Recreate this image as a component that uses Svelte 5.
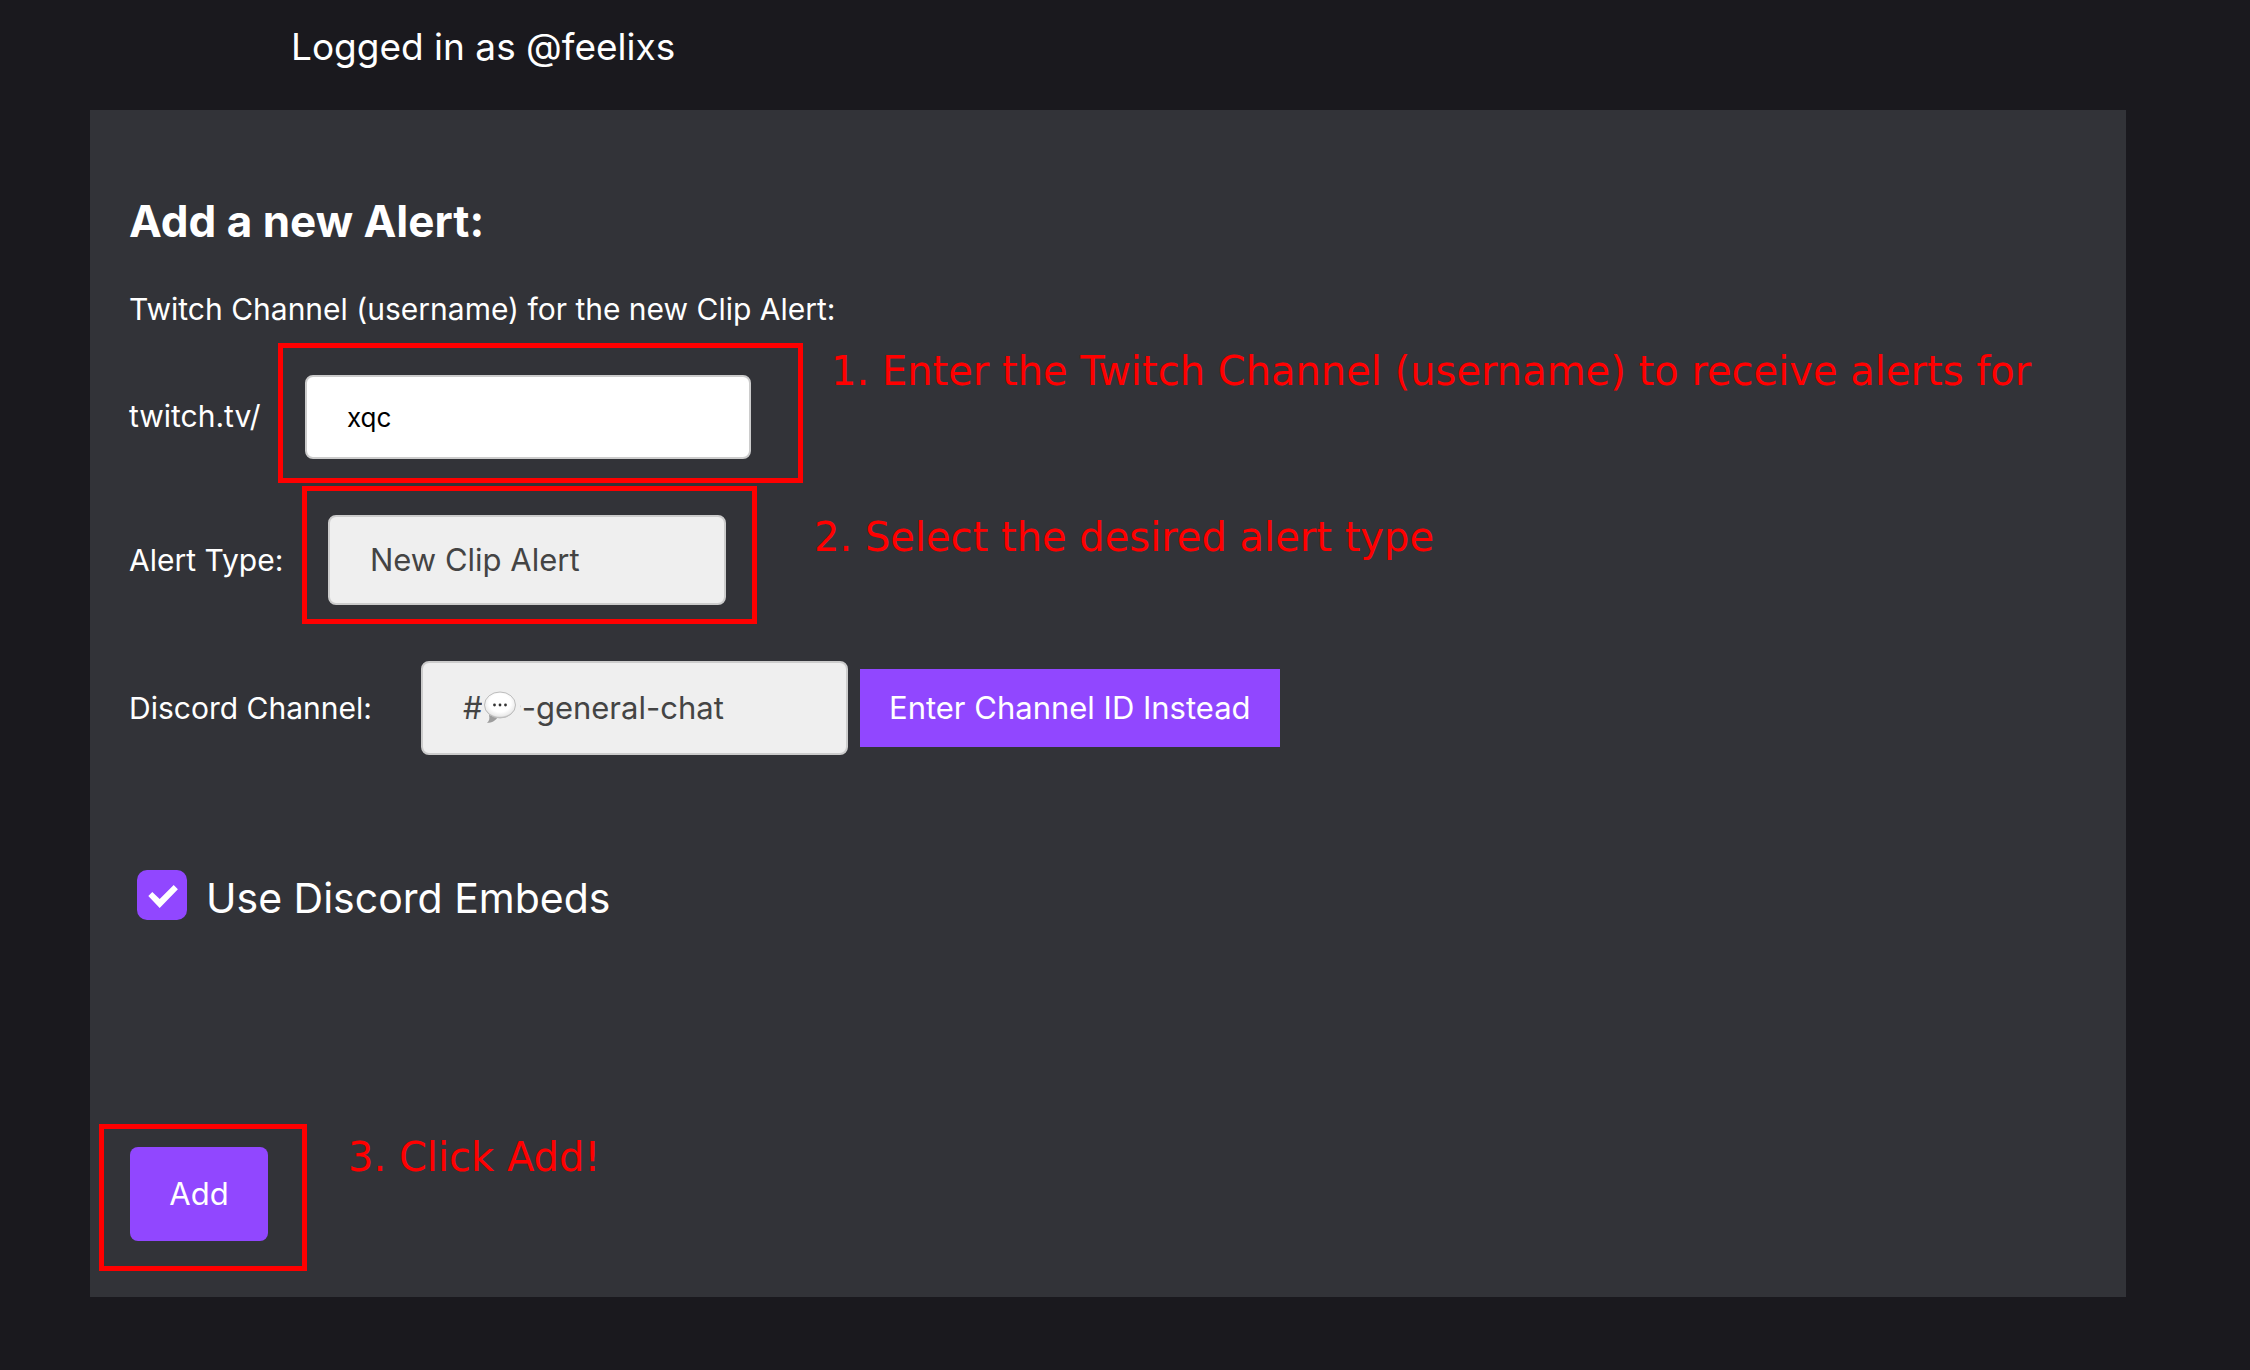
<script>
  let channel = $state('xqc');
  let embeds = $state(true);
</script>

<header class="session">Logged in as @feelixs</header>

<main class="panel">
  <h1>Add a new Alert:</h1>
  <p class="intro">Twitch Channel (username) for the new Clip Alert:</p>

  <div class="row">
    <label class="label-channel" for="channel">twitch.tv/</label>
    <div class="mark mark-channel">
      <input id="channel" class="field" type="text" bind:value={channel} />
    </div>
    <span class="note note-channel">1. Enter the Twitch Channel (username) to receive alerts for</span>
  </div>

  <div class="row row-type">
    <label class="label-type" for="type">Alert Type:</label>
    <div class="mark mark-type">
      <select id="type" class="field">
        <option>New Clip Alert</option>
      </select>
    </div>
    <span class="note note-type">2. Select the desired alert type</span>
  </div>

  <div class="row row-discord">
    <label class="label-discord" for="discord">Discord Channel:</label>
    <div class="discord">
      <select id="discord" class="field">
        <option>#💬-general-chat</option>
      </select>
      <!-- shaded speech bubble drawn over the plain emoji glyph -->
      <svg class="bubble" viewBox="0 0 38 42" aria-hidden="true">
        <defs>
          <radialGradient id="shade" cx="0.5" cy="0.42" r="0.58">
            <stop offset="0.6" stop-color="#fff" />
            <stop offset="0.88" stop-color="#ebebeb" />
            <stop offset="1" stop-color="#b4b4b4" />
          </radialGradient>
        </defs>
        <rect width="38" height="42" fill="#efefef" />
        <path d="M7 28 C8 32 7 34 5 36 C10 36 14 33 16 30 Z" fill="#9d9d9d" />
        <ellipse cx="18" cy="18" rx="15.5" ry="13" fill="url(#shade)" stroke="#bdbdbd" />
        <circle cx="12.5" cy="18" r="1.4" fill="#333" />
        <circle cx="18" cy="18" r="1.4" fill="#333" />
        <circle cx="23.500" cy="18" r="1.4" fill="#333" />
      </svg>
    </div>
    <button type="button" class="swap">Enter Channel ID Instead</button>
  </div>

  <label class="embeds">
    <span class="tick">
      <input type="checkbox" bind:checked={embeds} />
      <svg viewBox="0 0 50 50" aria-hidden="true"><path d="M11.3 26 L15.3 22 L22.7 29 L36.7 15 L40.9 19.200 L22.7 38 Z" fill="#fff" /></svg>
    </span>
    Use Discord Embeds
  </label>

  <div class="row row-add">
    <div class="mark mark-add">
      <button type="button" class="add">Add</button>
    </div>
    <span class="note note-add">3. Click Add!</span>
  </div>
</main>

<style>
  :global(body) {
    background: #1a191e;
    color: #fff;
    font-family: Inter, 'Liberation Sans', sans-serif;
    font-size: 30px;
    line-height: 40px;
  }
  .session {
    padding: 23px 0 39px 291px;
    font-size: 37px;
    line-height: 48px;
  }
  .panel {
    box-sizing: border-box;
    margin: 0 124px 0 90px;
    padding: 81px 0 26px 39px;
    background: #323338;
  }
  h1 {
    margin: 0;
    font-size: 44px;
    line-height: 60px;
    font-weight: 700;
  }
  .intro {
    margin: 38px 0 14px;
  }
  .row {
    display: flex;
    align-items: baseline;
    white-space: nowrap;
  }
  .row-type {
    margin-top: 3px;
  }
  .row-discord {
    margin-top: 37px;
  }
  .label-channel {
    width: 149px;
  }
  .label-type {
    width: 173px;
  }
  .label-discord {
    width: 292px;
  }
  .mark {
    display: flex;
    border: 5px solid #f00;
  }
  .mark-channel {
    padding: 27px 47px 19px 22px;
  }
  .mark-type {
    padding: 24px 26px 14px 21px;
  }
  .mark-add {
    margin-left: -30px;
    padding: 18px 34px 25px 26px;
  }
  .field {
    appearance: none;
    box-sizing: border-box;
    margin: 0;
    padding: 0 40px;
    border: 2px solid #ccc;
    border-radius: 8px;
    background: #efefef;
    color: #444;
    font: inherit;
    font-size: 31px;
  }
  #channel {
    width: 446px;
    height: 84px;
    background: #fff;
    color: #000;
    font-size: 26px;
  }
  #type {
    width: 398px;
    height: 90px;
  }
  .discord {
    position: relative;
    display: flex;
  }
  #discord {
    width: 427px;
    height: 94px;
  }
  .bubble {
    position: absolute;
    top: 26px;
    left: 61px;
    width: 38px;
    height: 42px;
    pointer-events: none;
  }
  button {
    margin: 0;
    border: 0;
    background: #9147ff;
    color: #fff;
    font: inherit;
    font-size: 31px;
  }
  .swap {
    height: 78px;
    margin-left: 12px;
    padding: 0 29px;
  }
  .add {
    width: 138px;
    height: 94px;
    border-radius: 8px;
  }
  .note {
    align-self: flex-start;
    color: #f00;
    font-family: 'DejaVu Sans', sans-serif;
    font-size: 40px;
    line-height: 48px;
  }
  .note-channel {
    margin: 4px 0 0 28px;
  }
  .note-type {
    margin: 27px 0 0 57px;
  }
  .note-add {
    margin: 9px 0 0 41px;
  }
  .embeds {
    display: flex;
    align-items: flex-start;
    gap: 19px;
    width: max-content;
    margin: 115px 0 0 8px;
    font-size: 41px;
    line-height: 56px;
  }
  .tick {
    position: relative;
    display: flex;
  }
  .tick input {
    appearance: none;
    width: 50px;
    height: 50px;
    margin: 0;
    border-radius: 10px;
    background: #fff;
  }
  .tick input:checked {
    background: #9147ff;
  }
  .tick svg {
    position: absolute;
    inset: 0;
    pointer-events: none;
  }
  .row-add {
    margin-top: 198px;
  }
</style>
